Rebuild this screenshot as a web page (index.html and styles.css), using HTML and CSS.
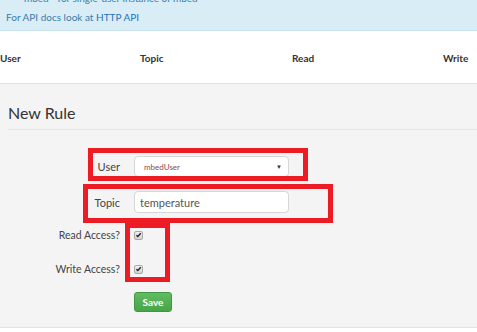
FILE: index.html
```html
<!DOCTYPE html>
<html lang="en">
<head>
  <meta charset="UTF-8">
  <title>Access Rules</title>
  <link rel="stylesheet" href="styles.css">
</head>
<body>

  <div class="alert">
    <p class="alert-line cut">mbed - for single-user instance of mbed</p>
    <p class="alert-line">For API docs look at <a href="#">HTTP API</a></p>
  </div>

  <div class="table-head">
    <span>User</span>
    <span>Topic</span>
    <span>Read</span>
    <span>Write</span>
  </div>

  <div class="panel">
    <h2>New Rule</h2>

    <form class="rule-form">
      <div class="group g-user">
        <label>User</label>
        <div class="select"><span>mbedUser</span><span class="caret">&#9660;</span></div>
      </div>
      <div class="group g-topic">
        <label>Topic</label>
        <div class="input">temperature</div>
      </div>
      <div class="group g-check">
        <label>Read Access?</label>
        <span class="check"><svg viewBox="0 0 8 8" width="8" height="8"><path d="M1.6 4.2 L3.2 5.8 L6.6 2" fill="none" stroke="#222" stroke-width="1.6"/></svg></span>
      </div>
      <div class="group g-check">
        <label>Write Access?</label>
        <span class="check"><svg viewBox="0 0 8 8" width="8" height="8"><path d="M1.6 4.2 L3.2 5.8 L6.6 2" fill="none" stroke="#222" stroke-width="1.6"/></svg></span>
      </div>
      <div class="group g-save">
        <span></span>
        <button type="button" class="save">Save</button>
      </div>
    </form>
  </div>

  <!-- annotation boxes drawn over the screenshot -->
  <div class="mark mark-user"></div>
  <div class="mark mark-topic"></div>
  <div class="mark mark-check"></div>

</body>
</html>
```

FILE: styles.css
```css
* { box-sizing: border-box; }
body {
  margin: 0;
  font-family: Lato, 'Open Sans', sans-serif;
  background: #fff;
  color: #333;
  position: relative;
  overflow: hidden;
}

.alert {
  height: 31px;
  background: #d9edf7;
  border-bottom: 1px solid #c8e4f1;
  padding: 0 6px;
  overflow: hidden;
  color: #3a7ba8;
  font-size: 10px;
}

.alert-line {
  margin: 0;
  line-height: 14px;
}

.alert-line.cut {
  margin-top: -9px;
  padding-left: 18px;
  margin-bottom: 5px;
}

.alert a {
  color: #2471b8;
  text-decoration: none;
}

.table-head {
  height: 53px;
  display: grid;
  grid-template-columns: 140px 152px 151px 1fr;
  align-items: center;
  font-size: 10px;
  font-weight: bold;
  color: #333;
  border-bottom: 1px solid #e2e2e2;
  padding-top: 2px;
}

.panel {
  background: #f4f4f4;
  height: 244px;
  padding: 0 0 0 8px;
  border-bottom: 1px solid #e4e4e4;
}

.panel h2 {
  margin: 0;
  padding-top: 19px;
  font-size: 16px;
  font-weight: normal;
  line-height: 20px;
  color: #333;
  padding-bottom: 6px;
  border-bottom: 1px solid #e6e6e6;
}

.rule-form {
  padding-top: 26px;
}

.group {
  display: grid;
  grid-template-columns: 112px 155px;
  column-gap: 14px;
  align-items: center;
}

.group label {
  text-align: right;
  font-size: 11px;
  color: #444;
}

.g-user { height: 21px; margin-bottom: 14px; }
.g-topic { height: 22px; margin-bottom: 11px; }
.g-check { height: 22px; margin-bottom: 12px; }
.g-check label { font-size: 10.5px; }
.g-save { height: 20px; margin-top: 4px; }

.select, .input {
  height: 100%;
  background: #fff;
  border: 1px solid #d6d6d6;
  border-radius: 4px;
}

.select {
  display: flex;
  align-items: center;
  justify-content: space-between;
  padding: 0 6px 0 9px;
  font-size: 8px;
  color: #8a4b4b;
}

.caret {
  font-size: 6px;
  color: #333;
}

.input {
  display: flex;
  align-items: center;
  padding: 0 5px;
  font-size: 11px;
  color: #555;
}

.check {
  width: 9px;
  height: 9px;
  display: flex;
  align-items: center;
  justify-content: center;
  border: 1px solid #a9a9a9;
  border-radius: 2px;
  background: linear-gradient(#f0f0f0, #d4d4d4);
}

.save {
  justify-self: start;
  width: 38px;
  height: 20px;
  padding: 0;
  font-family: Lato, sans-serif;
  font-size: 10px;
  font-weight: bold;
  color: #fff;
  background: linear-gradient(#62bc62, #47a447);
  border: 1px solid #419641;
  border-radius: 3px;
}

.mark {
  position: absolute;
  border: 5px solid #ed1c24;
}

.mark-user { left: 88px; top: 148px; width: 220px; height: 33px; }
.mark-topic { left: 83px; top: 184px; width: 250px; height: 39px; }
.mark-check { left: 125px; top: 223px; width: 45px; height: 59px; }
```
